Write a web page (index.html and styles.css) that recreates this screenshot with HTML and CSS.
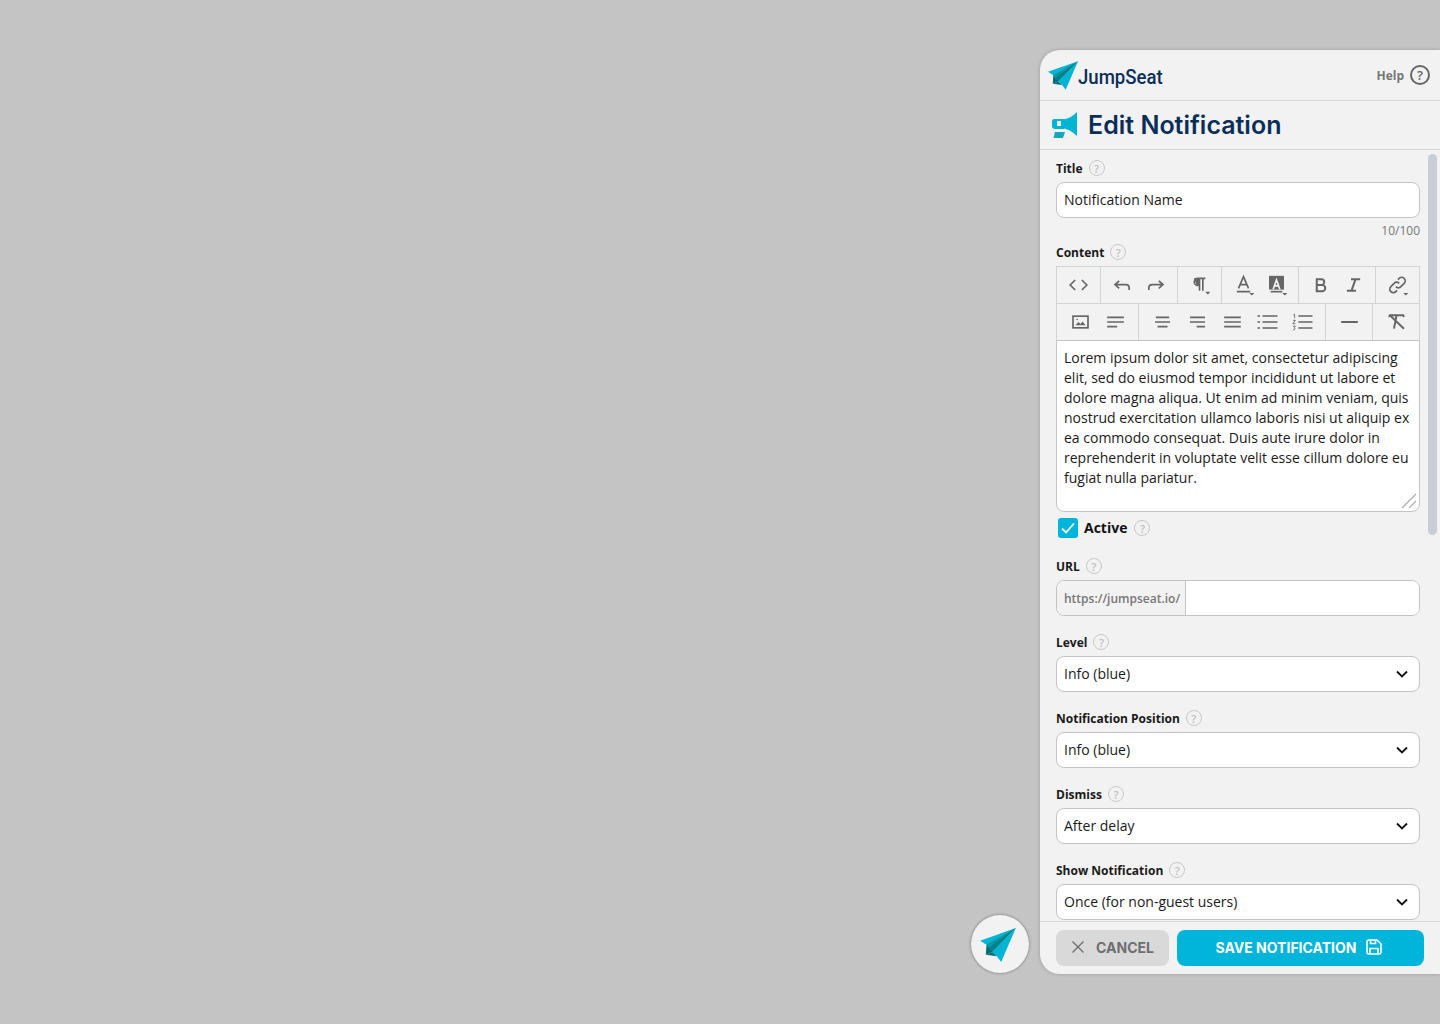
FILE: index.html
```html
<!DOCTYPE html>
<html lang="en">
<head>
    <meta charset="UTF-8">
    <meta name="viewport" content="width=device-width, initial-scale=1.0">
    <title>Edit Notification</title>
    <link rel="stylesheet" href="styles.css">
</head>
<body>
    <!-- Shared plane mark, used by the logo and the launcher -->
    <svg class="defs" width="0" height="0">
        <symbol id="plane" viewBox="0 0 107 102">
            <polygon points="107,0 0,38 19,50" fill="#00b5d3"/>
            <polygon points="107,0 19,50 17,80 36,72" fill="#066d74"/>
            <polygon points="107,0 19,50 26,61" fill="#0797ab"/>
            <polygon points="107,0 26,61 36,72" fill="#07808c"/>
            <polygon points="107,0 36,72 50,85 63,102" fill="#00b5d3"/>
            <polygon points="36,72 17,80 50,85" fill="#066d74"/>
        </symbol>
    </svg>

    <button type="button" class="launcher" aria-label="JumpSeat">
        <svg width="36" height="34"><use href="#plane"/></svg>
    </button>

    <div class="panel">
        <div class="panel-top">
            <div class="logo">
                <svg width="30" height="29"><use href="#plane"/></svg>
                <span class="logo-text">JumpSeat</span>
            </div>
            <div class="help-link">Help <span class="help-circle">?</span></div>
        </div>

        <div class="panel-title">
            <svg width="26" height="28" viewBox="0 0 26 28">
                <path d="M25 1v24c-5-4.500-8-6.500-13-7.500l-1-9c6-1 10-3.500 14-7.500z" fill="#00b5d3"/>
                <path d="M2 8h10v10H3c-1.500 0-3-1-3-2.500V10c0-1 1-2 2-2z" fill="#00b5d3"/>
                <rect x="5" y="10" width="4" height="5" fill="#f2f2f2"/>
                <path d="M3 21h10l-2 6H1.500z" fill="#16a6c0"/>
            </svg>
            <h1>Edit Notification</h1>
        </div>

        <div class="panel-body">
            <div class="scroll-thumb"></div>

            <div class="field-label">Title <span class="tip">?</span></div>
            <input type="text" class="cont" value="Notification Name">
            <div class="counter">10/100</div>

            <div class="field-label">Content <span class="tip">?</span></div>
            <div class="toolbar">
                <div class="tool-row tool-row-top">
                    <div class="tool-group">
                        <svg class="tool" viewBox="0 0 24 24"><path d="M8 6l-6 6 6 6M16 6l6 6-6 6"/></svg>
                    </div>
                    <div class="tool-group">
                        <svg class="tool" viewBox="0 0 24 24"><path d="M8 7l-5 4.500 5 4.500M3 11.500h13c2.500 0 4 1.500 4 4v2.500"/></svg>
                        <svg class="tool" viewBox="0 0 24 24"><path d="M16 7l5 4.500-5 4.500M21 11.500H8c-2.500 0-4 1.500-4 4v2.500"/></svg>
                    </div>
                    <div class="tool-group">
                        <svg class="tool" viewBox="0 0 24 24"><path d="M19 4H10a4.200 4.200 0 0 0 0 8.500h2M12 4v15M16 4v15"/><path class="solid" d="M5 4h7v8.500H9z"/><path class="solid" d="M19 20h6l-3 3.500z"/></svg>
                    </div>
                    <div class="tool-group">
                        <svg class="tool" viewBox="0 0 24 24"><path d="M6 16L12 2l6 14M8 11.500h8M4 20h16"/><path class="solid" d="M19 21.500h6l-3 3z"/></svg>
                        <svg class="tool" viewBox="0 0 24 24"><path class="solid" d="M3 1h18v16.500H3z"/><path class="light" d="M8 17l4-11 4 11M9.500 13h5"/><path d="M5 20h14"/><path class="solid" d="M19 21.500h6l-3 3z"/></svg>
                    </div>
                    <div class="tool-group">
                        <svg class="tool" viewBox="0 0 24 24"><path class="thick" d="M7.500 5h5.500a3.500 3.500 0 0 1 0 7H7.500zM7.500 12H14a3.700 3.700 0 0 1 0 7.500H7.500z"/></svg>
                        <svg class="tool" viewBox="0 0 24 24"><path class="thick" d="M9 5h11M4 19h11M14.500 5l-5 14"/></svg>
                    </div>
                    <div class="tool-group">
                        <svg class="tool" viewBox="0 0 24 24"><path d="M10 14a4 4 0 0 0 6 0l4-4a4 4 0 0 0-6-6l-1.500 1.500M14 10a4 4 0 0 0-6 0l-4 4a4 4 0 0 0 6 6l1.500-1.500"/><path class="solid" d="M19 21.500h6l-3 3z"/></svg>
                    </div>
                </div>
                <div class="tool-row">
                    <div class="tool-group">
                        <svg class="tool tool-wide" viewBox="0 0 24 24"><rect x="3" y="5" width="18" height="14"/><path class="solid" d="M6 16l3.500-4 2.500 2.500 2.500-3L18 16z"/><circle class="solid" cx="8" cy="9" r="1"/></svg>
                        <svg class="tool tool-wide" viewBox="0 0 24 24"><path d="M2 6.500h20M2 12h20M2 17.500h12"/></svg>
                    </div>
                    <div class="tool-group">
                        <svg class="tool tool-wide" viewBox="0 0 24 24"><path d="M4 6.500h16M3 12h18M6 17.500h12"/></svg>
                        <svg class="tool tool-wide" viewBox="0 0 24 24"><path d="M3 6.500h18M3 12h18M11 17.500h10"/></svg>
                        <svg class="tool tool-wide" viewBox="0 0 24 24"><path d="M2 6.500h20M2 12h20M2 17.500h20"/></svg>
                        <svg class="tool tool-wide" viewBox="0 0 24 24"><path d="M6 4.800h18M6 12h18M6 19.200h18"/><path d="M0 4.800h3M0 12h3M0 19.200h3"/></svg>
                        <svg class="tool tool-wide" viewBox="0 0 24 24"><path d="M7 4.800h17M7 12h17M7 19.200h17"/><path class="fine" d="M1 3.500l1.500-1v5M.5 10h3l-3 4h3M.5 17h3l-1.500 2c1.500 0 1.500 3-1.500 2.500"/></svg>
                    </div>
                    <div class="tool-group">
                        <svg class="tool tool-wide" viewBox="0 0 24 24"><path class="thick" d="M2 12h20"/></svg>
                    </div>
                    <div class="tool-group">
                        <svg class="tool tool-wide" viewBox="0 0 24 24"><path class="thick" d="M3 4h18M3 4l1 2M21 4l-1 2M12 4L9 20M4 4l17 16"/></svg>
                    </div>
                </div>
            </div>
            <div class="editor">
                Lorem ipsum dolor sit amet, consectetur adipiscing elit, sed do eiusmod tempor incididunt ut labore et dolore magna aliqua. Ut enim ad minim veniam, quis nostrud exercitation ullamco laboris nisi ut aliquip ex ea commodo consequat. Duis aute irure dolor in reprehenderit in voluptate velit esse cillum dolore eu fugiat nulla pariatur.
                <svg class="grip" width="16" height="16" viewBox="0 0 16 16"><path d="M1 15L15 1M8 15l7-7"/></svg>
            </div>

            <div class="active-row">
                <span class="check">
                    <svg width="16" height="14" viewBox="0 0 16 14"><path d="M2 7.500l4 4 8-9"/></svg>
                </span>
                <span class="active-label">Active</span>
                <span class="tip">?</span>
            </div>

            <div class="field-label">URL <span class="tip">?</span></div>
            <div class="url-group">
                <span class="url-prefix">https://jumpseat.io/</span>
                <input type="text" class="url-input">
            </div>

            <div class="field-label">Level <span class="tip">?</span></div>
            <div class="select-wrap">
                <select class="cont"><option>Info (blue)</option></select>
                <svg class="chevron" width="12" height="8" viewBox="0 0 12 8"><path d="M1 1.500l5 5 5-5"/></svg>
            </div>

            <div class="field-label">Notification Position <span class="tip">?</span></div>
            <div class="select-wrap">
                <select class="cont"><option>Info (blue)</option></select>
                <svg class="chevron" width="12" height="8" viewBox="0 0 12 8"><path d="M1 1.500l5 5 5-5"/></svg>
            </div>

            <div class="field-label">Dismiss <span class="tip">?</span></div>
            <div class="select-wrap">
                <select class="cont"><option>After delay</option></select>
                <svg class="chevron" width="12" height="8" viewBox="0 0 12 8"><path d="M1 1.500l5 5 5-5"/></svg>
            </div>

            <div class="field-label">Show Notification <span class="tip">?</span></div>
            <div class="select-wrap">
                <select class="cont"><option>Once (for non-guest users)</option></select>
                <svg class="chevron" width="12" height="8" viewBox="0 0 12 8"><path d="M1 1.500l5 5 5-5"/></svg>
            </div>
        </div>

        <div class="panel-foot">
            <button type="button" class="btn btn-cancel">
                <svg width="14" height="14" viewBox="0 0 14 14"><path d="M1.500 1.500l11 11M12.500 1.500l-11 11"/></svg>
                CANCEL
            </button>
            <button type="button" class="btn btn-save">
                SAVE NOTIFICATION
                <svg width="16" height="16" viewBox="0 0 16 16"><path d="M1 3a2 2 0 0 1 2-2h8l4 4v8a2 2 0 0 1-2 2H3a2 2 0 0 1-2-2z"/><path d="M4.500 1v3.500h5V1M4 15V9.500h8V15"/></svg>
            </button>
        </div>
    </div>
</body>
</html>
```

FILE: styles.css
```css
body {
    margin: 0;
    padding: 50px 0 0;
    height: 1024px;
    box-sizing: border-box;
    display: flex;
    justify-content: flex-end;
    align-items: flex-start;
    gap: 11px;
    background: #c4c4c4;
    font-family: "Open Sans", sans-serif;
    overflow: hidden;
}

.defs {
    position: absolute;
}

button {
    font-family: inherit;
    border: none;
    cursor: pointer;
}

/* Launcher */
.launcher {
    width: 58px;
    height: 58px;
    margin-top: 865px;
    padding: 0;
    border-radius: 50%;
    background: #f2f2f2;
    box-shadow: 0 0 3px rgba(0, 0, 0, 0.45);
    display: flex;
    align-items: center;
    justify-content: center;
}

.launcher svg {
    margin: 2px 4px 0 0;
}

/* Panel */
.panel {
    width: 400px;
    height: 924px;
    background: #f2f2f2;
    border-radius: 20px 0 0 20px;
    box-shadow: 0 0 4px rgba(0, 0, 0, 0.2);
    display: flex;
    flex-direction: column;
}

.panel-top {
    height: 50px;
    flex: none;
    box-sizing: content-box;
    border-bottom: 1px solid #d6d6d6;
    display: flex;
    align-items: center;
    justify-content: space-between;
    padding: 0 10px 0 8px;
}

.logo {
    display: flex;
    align-items: center;
}

.logo-text {
    font-family: Roboto, sans-serif;
    font-size: 21px;
    font-weight: 500;
    color: #0b2e59;
    margin-top: 3px;
    transform: scaleX(0.885);
    transform-origin: left center;
}

.help-link {
    display: flex;
    align-items: center;
    gap: 6px;
    font-size: 12px;
    font-weight: 700;
    color: #777;
}

.help-circle {
    width: 16px;
    height: 16px;
    border: 2px solid #666;
    border-radius: 50%;
    display: flex;
    align-items: center;
    justify-content: center;
    font-size: 13px;
    font-weight: 600;
    color: #666;
}

.panel-title {
    height: 48px;
    flex: none;
    border-bottom: 1px solid #d6d6d6;
    display: flex;
    align-items: center;
    gap: 10px;
    padding-left: 12px;
}

.panel-title h1 {
    margin: 0;
    font-family: Inter, sans-serif;
    font-size: 25px;
    font-weight: 600;
    color: #0b2e59;
}

.panel-body {
    flex: 1;
    min-height: 0;
    overflow: hidden;
    position: relative;
    padding: 8px 20px 0 16px;
    border-bottom: 1px solid #d6d6d6;
}

.scroll-thumb {
    position: absolute;
    top: 4px;
    right: 3px;
    width: 9px;
    height: 381px;
    border-radius: 5px;
    background: #c8ced3;
}

.field-label {
    height: 20px;
    margin-bottom: 4px;
    display: flex;
    align-items: center;
    gap: 6px;
    font-size: 12px;
    font-weight: 700;
    color: #1a1a1a;
}

.tip {
    width: 14px;
    height: 14px;
    border: 1.500px solid #c8c8c8;
    border-radius: 50%;
    display: flex;
    align-items: center;
    justify-content: center;
    font-size: 11px;
    font-weight: 600;
    color: #c0c0c0;
}

.cont {
    display: block;
    width: 100%;
    height: 36px;
    box-sizing: border-box;
    padding: 0 7px 2px;
    margin-bottom: 16px;
    border: 1px solid #c4c4c4;
    border-radius: 8px;
    background: #fff;
    font-family: inherit;
    font-size: 14px;
    color: #1a1a1a;
    appearance: none;
}

.counter {
    height: 16px;
    margin: -12px 0 4px;
    text-align: right;
    font-size: 12px;
    color: #777;
}

/* Toolbar */
.toolbar {
    border: 1px solid #d4d4d4;
    border-bottom: none;
}

.tool-row {
    height: 36px;
    display: flex;
}

.tool-row .tool-group {
    padding: 0 5px 0 6px;
}

.tool-row-top {
    border-bottom: 1px solid #d4d4d4;
}

.tool-row-top .tool-group {
    padding: 0 5px;
}

.tool-group {
    display: flex;
    align-items: center;
    border-right: 1px solid #d4d4d4;
}

.tool-group:last-child {
    border-right: none;
}

.tool {
    width: 33px;
    height: 20px;
    overflow: visible;
    fill: none;
    stroke: #666;
    stroke-width: 2;
}

.tool-wide {
    width: 35px;
}

.tool .solid {
    fill: #666;
    stroke: none;
}

.tool .light {
    stroke: #f2f2f2;
}

.tool .thick {
    stroke-width: 2.400;
}

.tool .fine {
    stroke-width: 1;
}

/* Editor */
.editor {
    position: relative;
    height: 172px;
    box-sizing: border-box;
    padding: 7px 7px 0;
    border: 1px solid #c4c4c4;
    border-radius: 0 0 8px 8px;
    background: #fff;
    font-size: 14px;
    line-height: 20px;
    color: #1a1a1a;
}

.grip {
    position: absolute;
    right: 2px;
    bottom: 2px;
    fill: none;
    stroke: #b0b0b0;
    stroke-width: 1.400;
}

.active-row {
    height: 20px;
    margin: 6px 0 18px 2px;
    display: flex;
    align-items: center;
}

.check {
    width: 20px;
    height: 20px;
    border-radius: 3px;
    background: #00b5d9;
    display: flex;
    align-items: center;
    justify-content: center;
}

.check svg {
    fill: none;
    stroke: #fff;
    stroke-width: 1.800;
}

.active-label {
    margin: 0 7px 2px 6px;
    font-size: 14px;
    font-weight: 700;
    color: #111;
}

/* URL */
.url-group {
    height: 36px;
    box-sizing: border-box;
    margin-bottom: 16px;
    display: flex;
    border: 1px solid #c4c4c4;
    border-radius: 8px;
    overflow: hidden;
    background: #fff;
}

.url-prefix {
    width: 129px;
    flex: none;
    padding-left: 7px;
    box-sizing: border-box;
    display: flex;
    align-items: center;
    border-right: 1px solid #c4c4c4;
    background: #f2f2f2;
    font-size: 12px;
    font-weight: 600;
    color: #777;
}

.url-input {
    flex: 1;
    min-width: 0;
    border: none;
    outline: none;
}

.select-wrap {
    position: relative;
}

.chevron {
    position: absolute;
    right: 12px;
    top: 14px;
    fill: none;
    stroke: #111;
    stroke-width: 1.800;
}

/* Footer buttons */
.panel-foot {
    height: 52px;
    flex: none;
    box-sizing: border-box;
    padding: 8px 16px 8px;
    display: flex;
    gap: 8px;
}

.btn {
    height: 36px;
    padding: 0 6px 2px;
    border-radius: 8px;
    display: flex;
    align-items: center;
    justify-content: center;
    font-family: Inter, sans-serif;
    font-size: 14px;
    font-weight: 700;
}

.btn svg {
    fill: none;
    stroke: currentColor;
}

.btn-cancel {
    width: 113px;
    gap: 11px;
    background: #d9d9d9;
    color: #6e6e6e;
}

.btn-cancel svg {
    stroke-width: 1.400;
}

.btn-save {
    flex: 1;
    gap: 10px;
    padding-right: 9px;
    background: #00b5d9;
    color: #fff;
}

.btn-save svg {
    stroke-width: 1.600;
}
```
